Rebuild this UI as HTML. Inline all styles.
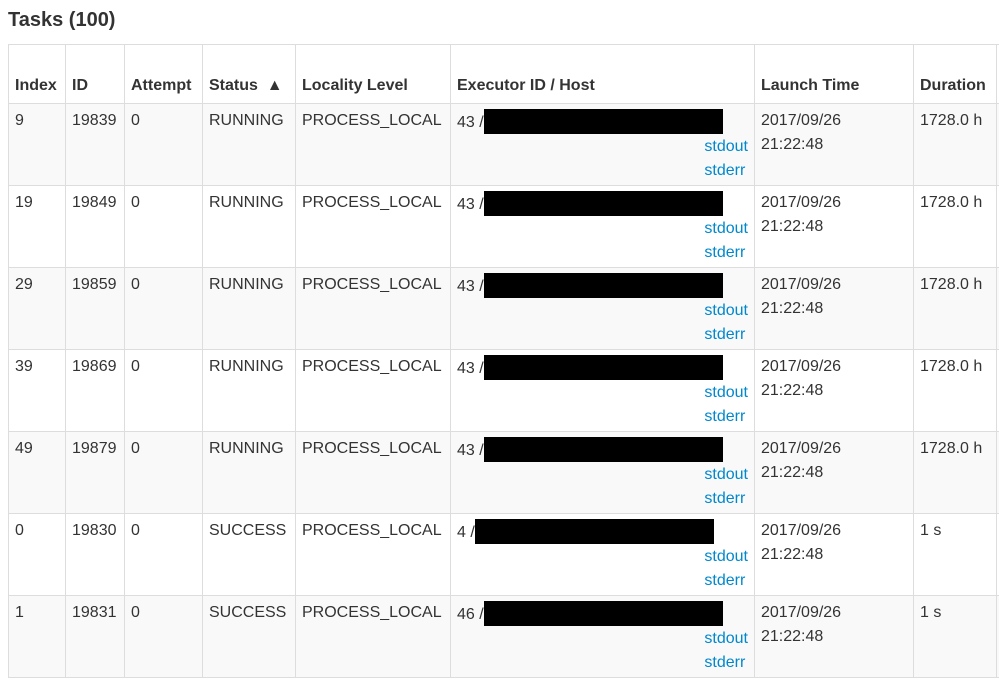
<!DOCTYPE html>
<html><head><meta charset="utf-8"><style>
html,body{margin:0;padding:0;background:#fff;width:999px;height:681px;overflow:hidden}
body{font-family:"Liberation Sans",Arial,sans-serif;font-size:16px;color:#333}
h4{position:absolute;left:8px;top:8px;margin:0;font-size:20px;font-weight:bold;line-height:24px}
table{position:absolute;left:8px;top:44px;border-collapse:collapse;table-layout:fixed;width:1000px}
td,th{border:1px solid #ddd;padding:5px 6px 0 6px;vertical-align:top;line-height:24px;text-align:left;white-space:nowrap;overflow:hidden}
th{vertical-align:bottom;padding-bottom:5px;font-weight:bold}
thead tr{height:59px}
tbody tr{height:82px}
tbody tr:nth-child(odd){background:#f9f9f9}
a{color:#0088cc;text-decoration:none}
.bar{display:inline-block;background:#000;width:239px;height:25px;vertical-align:-7px}
.lk{float:right;text-align:left;margin-right:0px}
</style></head><body>
<h4>Tasks (100)</h4>
<table>
<colgroup><col style="width:57px"><col style="width:59px"><col style="width:78px"><col style="width:93px"><col style="width:155px"><col style="width:304px"><col style="width:159px"><col style="width:83px"><col></colgroup>
<thead><tr><th>Index</th><th>ID</th><th>Attempt</th><th>Status &nbsp;▲</th><th>Locality Level</th><th>Executor ID / Host</th><th>Launch Time</th><th>Duration</th><th></th></tr></thead>
<tbody>
<tr><td>9</td><td>19839</td><td>0</td><td>RUNNING</td><td>PROCESS_LOCAL</td><td>43 /<span class="bar"></span><div class="lk"><a>stdout</a><br><a>stderr</a></div></td><td>2017/09/26<br>21:22:48</td><td>1728.0 h</td><td></td></tr>
<tr><td>19</td><td>19849</td><td>0</td><td>RUNNING</td><td>PROCESS_LOCAL</td><td>43 /<span class="bar"></span><div class="lk"><a>stdout</a><br><a>stderr</a></div></td><td>2017/09/26<br>21:22:48</td><td>1728.0 h</td><td></td></tr>
<tr><td>29</td><td>19859</td><td>0</td><td>RUNNING</td><td>PROCESS_LOCAL</td><td>43 /<span class="bar"></span><div class="lk"><a>stdout</a><br><a>stderr</a></div></td><td>2017/09/26<br>21:22:48</td><td>1728.0 h</td><td></td></tr>
<tr><td>39</td><td>19869</td><td>0</td><td>RUNNING</td><td>PROCESS_LOCAL</td><td>43 /<span class="bar"></span><div class="lk"><a>stdout</a><br><a>stderr</a></div></td><td>2017/09/26<br>21:22:48</td><td>1728.0 h</td><td></td></tr>
<tr><td>49</td><td>19879</td><td>0</td><td>RUNNING</td><td>PROCESS_LOCAL</td><td>43 /<span class="bar"></span><div class="lk"><a>stdout</a><br><a>stderr</a></div></td><td>2017/09/26<br>21:22:48</td><td>1728.0 h</td><td></td></tr>
<tr><td>0</td><td>19830</td><td>0</td><td>SUCCESS</td><td>PROCESS_LOCAL</td><td>4 /<span class="bar"></span><div class="lk"><a>stdout</a><br><a>stderr</a></div></td><td>2017/09/26<br>21:22:48</td><td>1 s</td><td></td></tr>
<tr><td>1</td><td>19831</td><td>0</td><td>SUCCESS</td><td>PROCESS_LOCAL</td><td>46 /<span class="bar"></span><div class="lk"><a>stdout</a><br><a>stderr</a></div></td><td>2017/09/26<br>21:22:48</td><td>1 s</td><td></td></tr>
</tbody></table>
</body></html>
